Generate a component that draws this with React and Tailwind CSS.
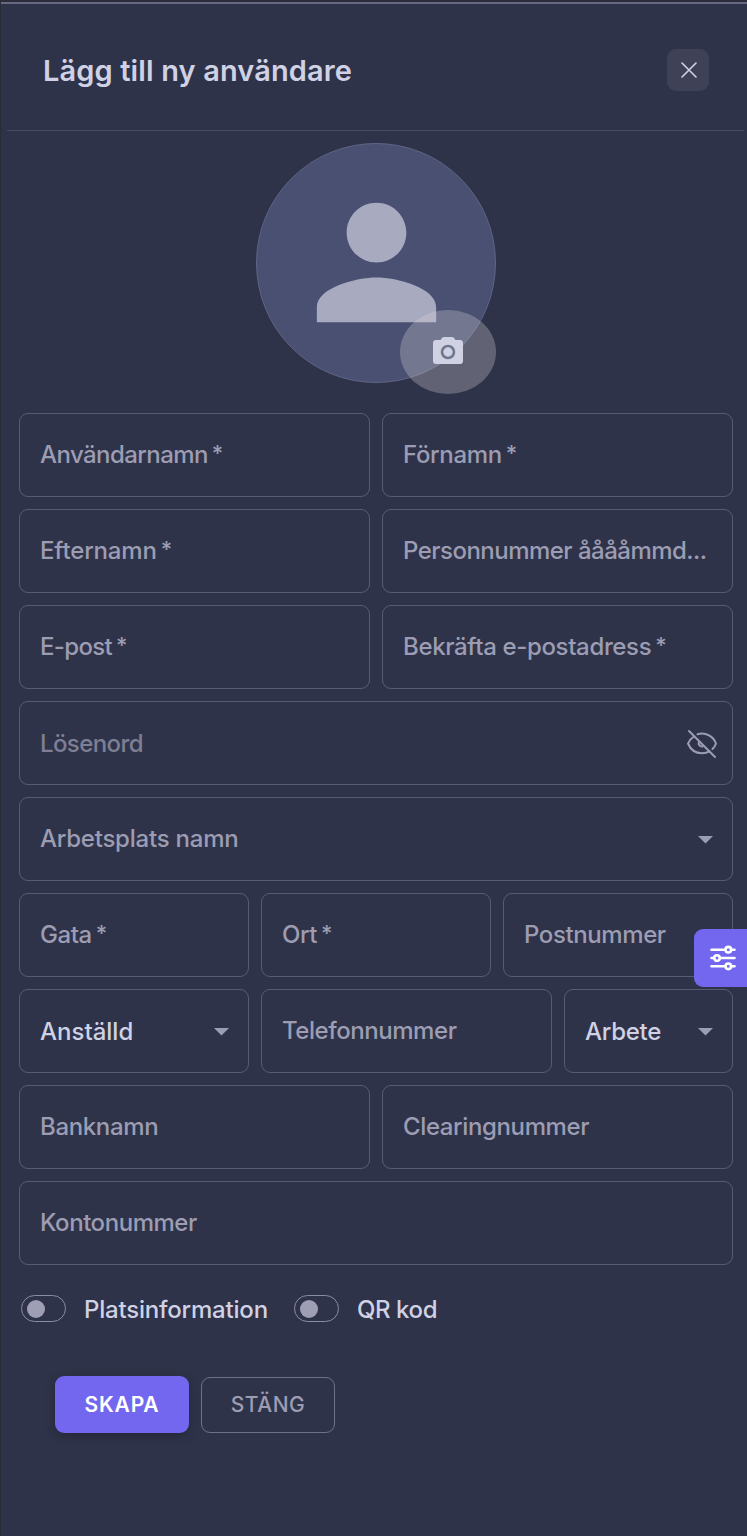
import { useState } from "react"

const Caret = () => (
  <svg viewBox="0 0 14 7" className="relative top-px -mr-px h-[7.5px] w-[15px] shrink-0 fill-[#9c9db3]">
    <path d="M0 0h14L7 7z" />
  </svg>
)

const EyeOff = () => (
  <svg
    viewBox="0 0 32 30"
    className="-mr-[5.5px] h-[30px] w-8 shrink-0"
    fill="none"
    stroke="#9c9db3"
    strokeWidth="2"
    strokeLinecap="round"
    strokeLinejoin="round"
  >
    <path d="M8 7.500C5.500 9 3 12 2 14.500C4.500 20.500 9 24.200 16 24.200C19 24.200 21.500 23.500 23.500 22.300" />
    <path d="M11.500 5.200C20 3 27.500 7.500 30 14.500C29.300 16.500 28.200 18.500 26.500 20" />
    <path d="M13 12.500C12 15 13.500 17.700 16.500 17.500" />
    <path d="M3 2L29 28" />
  </svg>
)

const Sliders = () => (
  <svg viewBox="0 0 26 26" className="size-[26px]" fill="none" stroke="currentColor" strokeWidth="2.6" strokeLinecap="round">
    <path d="M1.500 4.700H15M21 4.700h3.500M1.500 13H4M10 13h14.500M1.500 21.300H15M21 21.300h3.500" />
    <circle cx="18.300" cy="4.700" r="2.800" />
    <circle cx="7" cy="13" r="2.800" />
    <circle cx="18.300" cy="21.300" r="2.800" />
  </svg>
)

function Field({ label, required, className = "", text = "tracking-[-0.45px]", children }) {
  return (
    <label
      className={`flex h-[84px] min-w-0 items-center justify-between rounded-[9px] border border-[#595b72] px-5 text-[#9c9db3] ${className}`}
    >
      <span className={`whitespace-nowrap text-[24px] font-medium leading-9 ${text}`}>
        {label}
        {required && <span className="relative -top-0.5 ml-1 text-[22px]">*</span>}
      </span>
      {children}
    </label>
  )
}

function Toggle({ label, checked, onChange, text = "" }) {
  return (
    <button type="button" role="switch" aria-checked={checked} onClick={onChange} className="flex items-center">
      <span
        className={`mb-px flex h-[27px] w-[45px] items-center rounded-full border border-[#8c8da3] px-[5px] ${
          checked ? "justify-end" : "justify-start"
        }`}
      >
        <span className="size-[18px] rounded-full bg-[#9e9eb4]" />
      </span>
      <span className={`ml-[18px] whitespace-nowrap pt-0.5 text-[24px] font-medium leading-[34px] text-[#cfd1e4] ${text}`}>
        {label}
      </span>
    </button>
  )
}

export default function App() {
  const [location, setLocation] = useState(false)
  const [qr, setQr] = useState(false)

  return (
    <div className="relative h-[1536px] w-[747px] overflow-hidden border-l border-[#2b2c3a] bg-[#2f3349] font-['Inter',sans-serif]">
      <div className="h-[2px] bg-[#2b2c3a]" />
      <div className="h-[2px] bg-[#686980]" />

      <header className="ml-1.5 mr-[3px] flex h-[127px] items-center justify-between border-b border-[#484b60] pl-9 pr-[35px] pt-[6px]">
        <h1 className="pt-0.5 text-[29px] font-semibold leading-10 tracking-[0.12px] text-[#cfd1e4]">Lägg till ny användare</h1>
        <button type="button" aria-label="Stäng" className="flex size-[42px] items-center justify-center rounded-[9px] bg-[#3f4257]">
          <svg viewBox="0 0 16 16" className="ml-px size-4" stroke="#cfd1e4" strokeWidth="1.6" strokeLinecap="round">
            <path d="M1 1L15 15M15 1L1 15" />
          </svg>
        </button>
      </header>

      <div className="relative ml-[255px] mt-3 flex size-60 items-center justify-center rounded-full border border-[#5e6484] bg-[#4a5072]">
        <svg viewBox="0 0 24 24" className="mb-px size-[179px] shrink-0 fill-[#a8aac0]">
          <path d="M12 12c2.210 0 4-1.790 4-4s-1.790-4-4-4-4 1.790-4 4 1.790 4 4 4m0 2c-2.670 0-8 1.340-8 4v2h16v-2c0-2.660-5.330-4-8-4" />
        </svg>
        <button
          type="button"
          aria-label="Ladda upp bild"
          className="absolute -right-px top-[166px] flex h-[84px] w-24 items-center justify-center rounded-[50%] bg-[#d6d4d6]/30"
        >
          <svg viewBox="0 0 30 27" className="mb-[3px] h-[27px] w-[30px]">
            <path
              fill="#d0d2e4"
              d="M3 3h4.500l1.500-2a2.500 2.500 0 0 1 2-1h8a2.500 2.500 0 0 1 2 1L22.500 3H27a3 3 0 0 1 3 3v18a3 3 0 0 1-3 3H3a3 3 0 0 1-3-3V6a3 3 0 0 1 3-3z"
            />
            <circle cx="15" cy="15" r="6" fill="none" stroke="#70768f" strokeWidth="2.600" />
          </svg>
        </button>
      </div>

      <form className="ml-[18px] mr-[14px] mt-[30px]">
        <div className="flex flex-col gap-3">
          <div className="grid grid-cols-2 gap-3">
            <Field label="Användarnamn" required text="tracking-[-0.57px]" />
            <Field label="Förnamn" required text="tracking-[-0.35px]" />
            <Field label="Efternamn" required text="tracking-[-0.15px]" />
            <Field label="Personnummer ååååmmd..." text="tracking-[-0.52px]" />
            <Field label="E-post" required text="tracking-[-0.65px]" />
            <Field label="Bekräfta e-postadress" required text="tracking-[-0.35px]" />
          </div>
          <Field label="Lösenord" className="pt-px" text="text-[#7d7f95] tracking-[-0.6px]">
            <EyeOff />
          </Field>
          <Field label="Arbetsplats namn" text="tracking-[-0.23px]">
            <Caret />
          </Field>
          <div className="grid grid-cols-3 gap-3">
            <Field label="Gata" required />
            <Field label="Ort" required />
            <Field label="Postnummer" text="tracking-[-0.4px]" />
          </div>
          <div className="grid grid-cols-[230px_291px_169px] gap-3">
            <Field label="Anställd" text="pt-0.5 text-[#cfd1e4] tracking-normal">
              <Caret />
            </Field>
            <Field label="Telefonnummer" />
            <Field label="Arbete" text="pt-0.5 text-[#cfd1e4] tracking-[-0.25px]">
              <Caret />
            </Field>
          </div>
          <div className="grid grid-cols-2 gap-3">
            <Field label="Banknamn" text="tracking-[-0.35px]" />
            <Field label="Clearingnummer" text="tracking-[-0.38px]" />
          </div>
          <Field label="Kontonummer" />
        </div>

        <div className="ml-0.5 mt-[26px] flex items-center gap-[26px]">
          <Toggle label="Platsinformation" checked={location} onChange={() => setLocation(!location)} text="tracking-[-0.2px]" />
          <Toggle label="QR kod" checked={qr} onChange={() => setQr(!qr)} text="tracking-[-0.4px]" />
        </div>

        <div className="ml-9 mt-[49px] flex gap-3">
          <button
            type="submit"
            className="h-[57px] w-[134px] rounded-[9px] bg-[#7367f0] text-[21px] font-semibold tracking-[0.8px] text-white shadow-[0_3px_8px_rgba(30,31,42,0.6)]"
          >
            SKAPA
          </button>
          <button
            type="button"
            className="mt-px h-14 w-[134px] rounded-[9px] border border-[#6e7087] text-[21px] font-medium tracking-[0.5px] text-[#9c9db3]"
          >
            STÄNG
          </button>
        </div>
      </form>

      <button
        type="button"
        aria-label="Inställningar"
        className="absolute right-0 top-[929px] flex h-[58px] w-[53px] items-center rounded-l-[9px] bg-[#7367f0] pl-4 text-white"
      >
        <Sliders />
      </button>
    </div>
  )
}
